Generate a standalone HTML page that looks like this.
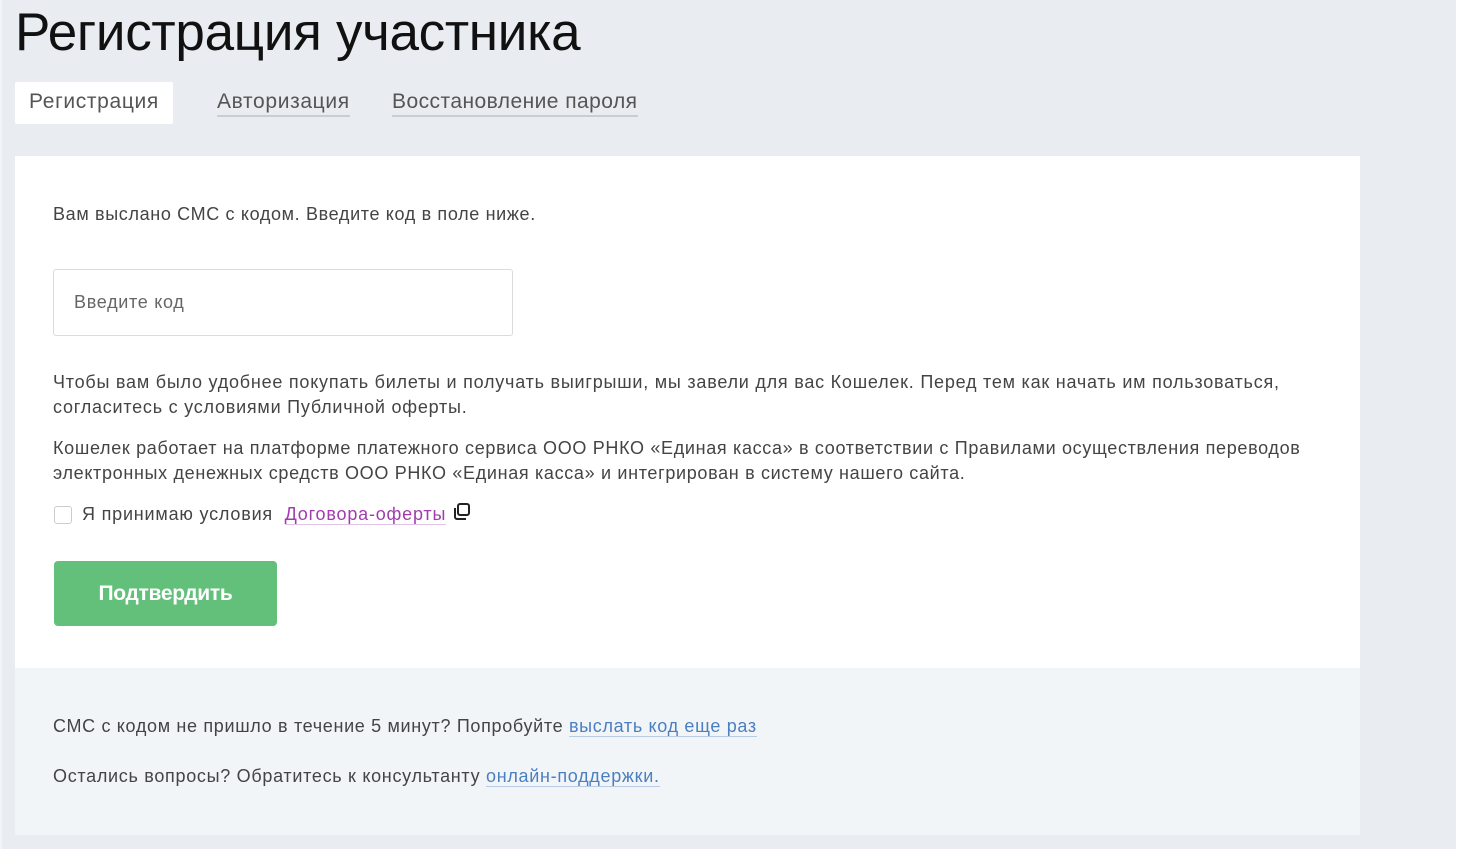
<!DOCTYPE html>
<html><head><meta charset="utf-8"><style>
body{margin:0;width:1460px;height:849px;background:#e9ecf0;font-family:"Liberation Sans",sans-serif;color:#444;position:relative;overflow:hidden}
.edge{position:absolute;top:0;right:0;width:4px;height:849px;background:#fff}
.edgel{position:absolute;top:0;left:0;width:2px;height:849px;background:#f3f4f6}
h1{position:absolute;left:15px;top:2px;margin:0;font-weight:400;font-size:53px;color:#111;letter-spacing:-0.3px}
.tab{position:absolute;top:90px;font-size:21px;color:#555;letter-spacing:0.65px}
.tab u{text-decoration:none;border-bottom:2px solid #c9ced4;padding-bottom:2px}
.tabA{position:absolute;left:15px;top:82px;width:158px;height:42px;background:#fff;border-radius:2px}
.card{position:absolute;left:15px;top:156px;width:1345px;height:512px;background:#fff}
.foot{position:absolute;left:15px;top:668px;width:1345px;height:167px;background:#f2f5f7}
.t{position:absolute;font-size:18px;letter-spacing:0.7px;color:#444;white-space:nowrap}
.inp{position:absolute;left:53px;top:269px;width:458px;height:65px;border:1px solid #d9dcdf;border-radius:3px;background:#fff}
.btn{position:absolute;left:54px;top:561px;width:223px;height:65px;background:#63c07b;border-radius:4px;color:#fff;font-size:21px;font-weight:bold;text-align:center;line-height:65px;letter-spacing:-0.3px}
.cb{position:absolute;left:54px;top:506px;width:16px;height:16px;border:1.5px solid #ccc;border-radius:3px;background:#fff}
a{color:#4a7fc1;text-decoration:none;border-bottom:1px solid #b9cbe3}
</style></head><body>
<div class="edgel"></div><div class="edge"></div>
<h1>Регистрация участника</h1>
<div class="tabA"></div>
<div class="tab" style="left:29px">Регистрация</div>
<div class="tab" style="left:217px"><u>Авторизация</u></div>
<div class="tab" style="left:392px;letter-spacing:0.45px"><u>Восстановление пароля</u></div>
<div class="card"></div>
<div class="foot"></div>
<div class="t" style="left:53px;top:204px;letter-spacing:0.65px">Вам выслано СМС с кодом. Введите код в поле ниже.</div>
<div class="inp"></div>
<div class="t" style="left:74px;top:292px;color:#666">Введите код</div>
<div class="t" style="left:53px;top:370px;line-height:25px;letter-spacing:0.77px">Чтобы вам было удобнее покупать билеты и получать выигрыши, мы завели для вас Кошелек. Перед тем как начать им пользоваться,<br>согласитесь с условиями Публичной оферты.</div>
<div class="t" style="left:53px;top:436px;line-height:25px;letter-spacing:0.67px">Кошелек работает на платформе платежного сервиса ООО РНКО «Единая касса» в соответствии с Правилами осуществления переводов<br>электронных денежных средств ООО РНКО «Единая касса» и интегрирован в систему нашего сайта.</div>
<div class="cb"></div>
<div class="t" style="left:82px;top:504px;letter-spacing:0.8px">Я принимаю условия &nbsp;<a style="color:#a23bb0;border-color:#e3c3ea">Договора-оферты</a></div>
<svg style="position:absolute;left:452px;top:502px" width="20" height="20" viewBox="0 0 20 20"><rect x="6" y="2" width="11" height="11" rx="2" fill="none" stroke="#222" stroke-width="2"/><path d="M3 6v9a2 2 0 0 0 2 2h9" fill="none" stroke="#222" stroke-width="2"/></svg>
<div class="btn">Подтвердить</div>
<div class="t" style="left:53px;top:716px;letter-spacing:0.67px">СМС с кодом не пришло в течение 5 минут? Попробуйте <a>выслать код еще раз</a></div>
<div class="t" style="left:53px;top:766px;letter-spacing:0.7px">Остались вопросы? Обратитесь к консультанту <a>онлайн-поддержки.</a></div>
</body></html>
